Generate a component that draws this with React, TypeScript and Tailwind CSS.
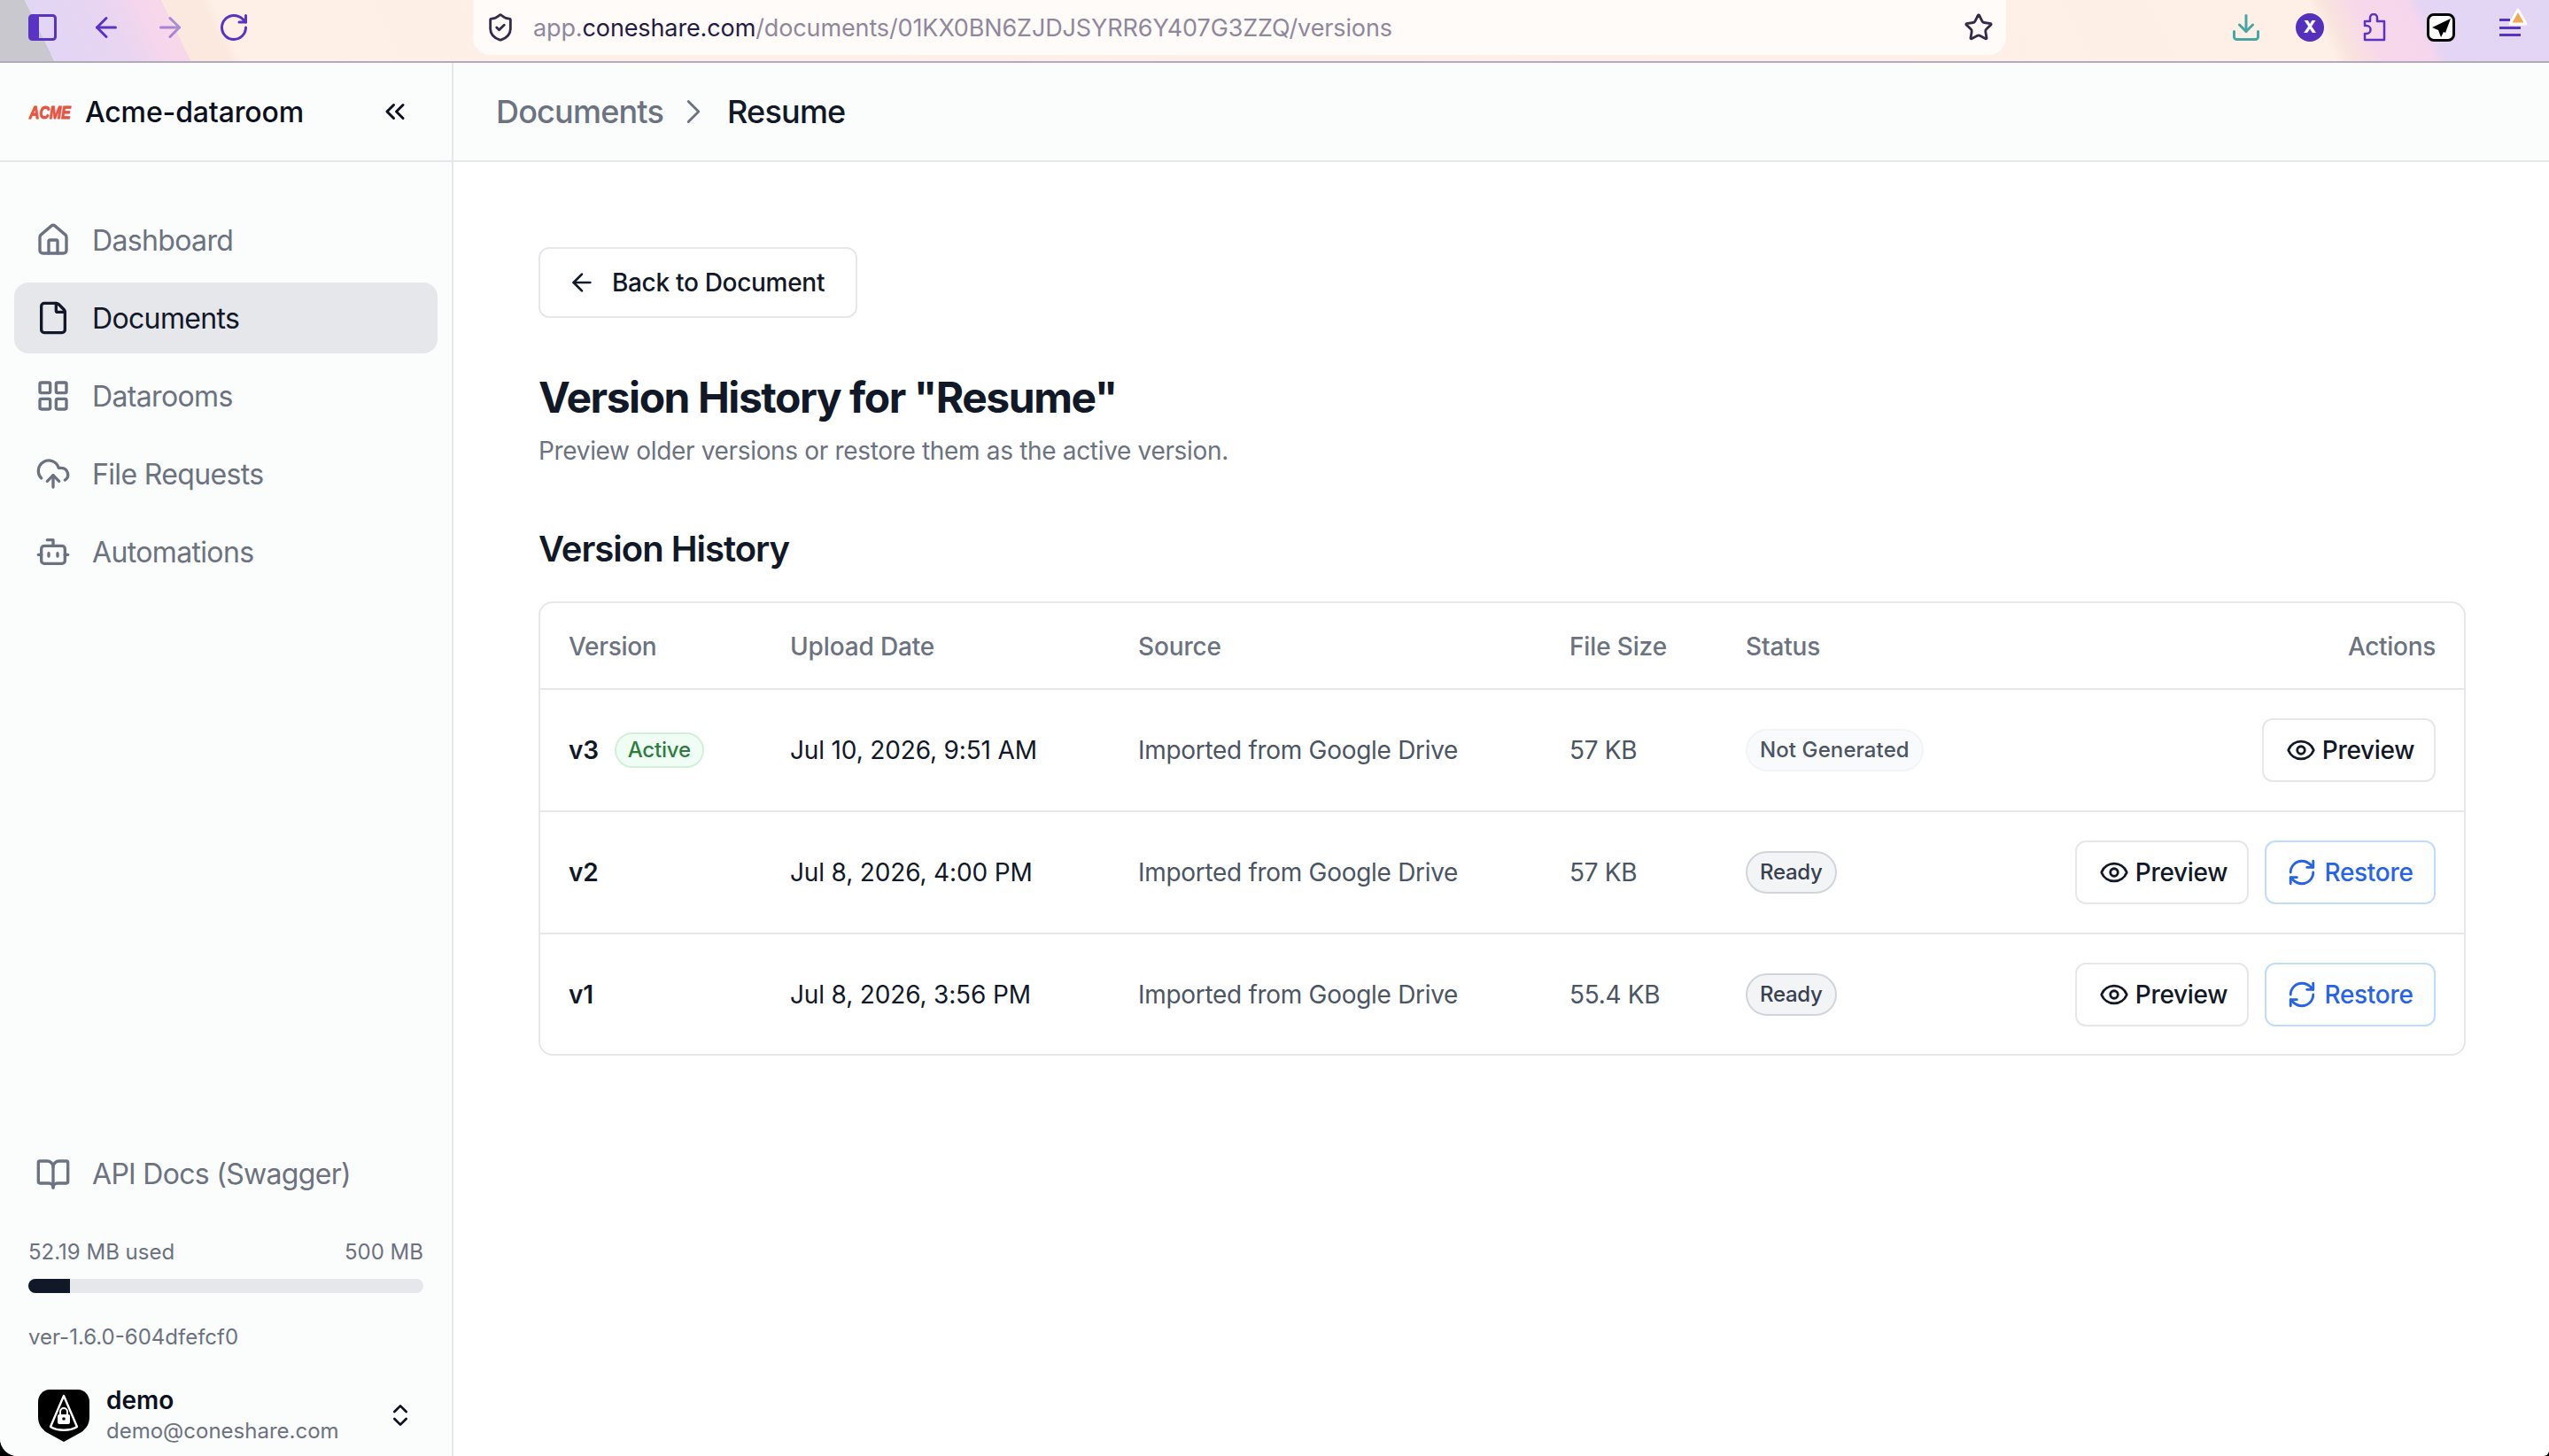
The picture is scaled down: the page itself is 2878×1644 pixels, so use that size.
import { ArrowLeft, BookOpen, Bot, ChevronRight, ChevronsLeft, ChevronsUpDown, CloudUpload, Download, Eye, File, House, LayoutGrid, RefreshCw, RotateCw, ShieldCheck, Star } from "lucide-react";

const navItems = [
  { icon: House, label: "Dashboard" },
  { icon: File, label: "Documents", active: true },
  { icon: LayoutGrid, label: "Datarooms" },
  { icon: CloudUpload, label: "File Requests" },
  { icon: Bot, label: "Automations" },
];

const versions = [
  { version: "v3", date: "Jul 10, 2026, 9:51 AM", size: "57 KB", status: "Not Generated", active: true },
  { version: "v2", date: "Jul 8, 2026, 4:00 PM", size: "57 KB", status: "Ready" },
  { version: "v1", date: "Jul 8, 2026, 3:56 PM", size: "55.4 KB", status: "Ready" },
];

function BrowserBar() {
  return (
    <div className="flex h-[71px] shrink-0 items-start border-b-2 border-[#b3a9bc] bg-[linear-gradient(64deg,#c9c8cf_2.1%,#e1d6f4_2.1%,#e8d5f1_5%,#f6d6ec_6.6%,#f7d8e9_7.4%,#fbe8df_7.4%,#fbe8df_8.9%,#fef0e6_9.4%,#fdeee9_50%,#fef0e6_90.6%,#f9e4de_91.2%,#f7d8ea_92.4%,#f6d6ec_94.4%,#e4d5f4_94.9%,#e1d6f4_100%)]">
      <div className="flex h-[62px] w-[534px] shrink-0 items-center pl-[32px] text-[#5a32c4]">
        <svg viewBox="0 0 32 32" className="h-[32px] w-[32px]" fill="none">
          <rect x="1.5" y="2.5" width="29" height="27" rx="3" stroke="currentColor" strokeWidth="3" />
          <rect x="2" y="3" width="10" height="26" fill="currentColor" />
        </svg>
        <ArrowLeft className="ml-[38px] h-[36px] w-[36px]" strokeWidth={2} />
        <ArrowLeft className="ml-[36px] h-[36px] w-[36px] rotate-180 opacity-50" strokeWidth={2} />
        <RotateCw className="ml-[36px] h-[36px] w-[36px]" strokeWidth={2} />
      </div>
      <div className="flex h-[62px] w-[1731px] shrink-0 items-center justify-between rounded-b-[20px] bg-[#fffbf9] pl-[14px] pr-[14px]">
        <div className="flex items-center gap-[20px]">
          <ShieldCheck className="h-[34px] w-[34px] text-[#342a4a]" strokeWidth={2} />
          <div className="text-[27px] leading-none tracking-[-0.12px] text-[#8f889c]">
            app.<span className="text-[#241b45]">coneshare.com</span>/documents/01KX0BN6ZJDJSYRR6Y407G3ZZQ/versions
          </div>
        </div>
        <Star className="h-[34px] w-[34px] text-[#342a4a]" strokeWidth={2} />
      </div>
      <div className="flex h-[62px] flex-1 items-center pl-[253px]">
        <Download className="h-[36px] w-[36px] text-[#46a6a6]" strokeWidth={2} />
        <div className="ml-[38px] flex h-[32px] w-[32px] items-center justify-center rounded-full bg-[#5530bd] text-[19px] font-extrabold text-white">
          X
        </div>
        <svg viewBox="0 0 26 32" className="ml-[44px] h-[32px] w-[26px] text-[#5a32c4]" fill="none" stroke="currentColor" strokeWidth="2.5" strokeLinejoin="round">
          <path d="M2 9h6V5a4 4 0 0 1 8 0v4h8v21H2v-7h2a4.5 4.5 0 0 0 0-9H2z" />
        </svg>
        <div className="ml-[46px] flex h-[32px] w-[32px] items-center justify-center rounded-[8px] border-[3px] border-black bg-white">
          <svg viewBox="0 0 26 26" className="h-[26px] w-[26px]">
            <path d="M24 3 3 13l7 3 3 8 3-6 2 1z" fill="#000" />
          </svg>
        </div>
        <div className="relative ml-[50px] flex h-[20px] w-[24px] flex-col justify-between">
          <div className="h-[3px] w-[12px] bg-[#5a32c4]" />
          <div className="h-[3px] w-[24px] bg-[#5a32c4]" />
          <div className="h-[3px] w-[24px] bg-[#5a32c4]" />
          <svg viewBox="0 0 24 22" className="absolute -right-[9px] -top-[13px] h-[22px] w-[24px]">
            <path d="M12 3 21 19H3z" fill="#f3a950" stroke="#fff" strokeWidth="3" strokeLinejoin="round" />
          </svg>
        </div>
      </div>
    </div>
  );
}

function Sidebar() {
  return (
    <aside className="flex w-[512px] shrink-0 flex-col border-r-2 border-[#e5e7eb] bg-[#fbfcfc]">
      <div className="flex h-[112px] shrink-0 items-center border-b-2 border-[#e5e7eb] pl-[33px] pr-[46px]">
        <div className="w-[63px] origin-left scale-x-[0.76] font-['Liberation_Sans',sans-serif] text-[21px] font-bold italic leading-none text-[#e8523f] [-webkit-text-stroke:1px_#e8523f]">
          ACME
        </div>
        <div className="flex-1 pt-[2px] text-[32px] font-medium tracking-[-0.15px] text-[#0b1020]">Acme-dataroom</div>
        <ChevronsLeft className="h-[36px] w-[36px] text-[#0b1020]" strokeWidth={2} />
      </div>
      <nav className="flex flex-col gap-[8px] px-[16px] pt-[48px]">
        {navItems.map((item) => (
          <div
            key={item.label}
            className={
              item.active
                ? "flex h-[80px] items-center gap-[24px] rounded-[16px] bg-[#e6e7eb] px-[24px] text-[32px] tracking-[-0.65px] text-[#111827]"
                : "flex h-[80px] items-center gap-[24px] rounded-[16px] px-[24px] text-[32px] tracking-[-0.65px] text-[#6b7280]"
            }
          >
            <item.icon className="h-[40px] w-[40px] shrink-0" strokeWidth={2} />
            <span className="pt-[2px]">{item.label}</span>
          </div>
        ))}
      </nav>
      <div className="mt-auto flex flex-col">
        <div className="flex h-[80px] items-center gap-[24px] px-[40px] text-[32px] tracking-[-0.7px] text-[#6b7280]">
          <BookOpen className="h-[40px] w-[40px] shrink-0" strokeWidth={2} />
          API Docs (Swagger)
        </div>
        <div className="mt-[32px] flex justify-between px-[32px] text-[24px] leading-[32px] text-[#6b7280]">
          <span>52.19 MB used</span>
          <span>500 MB</span>
        </div>
        <div className="mx-[32px] mt-[14px] h-[16px] overflow-hidden rounded-full bg-[#e5e7eb]">
          <div className="h-full bg-[#111827]" style={{ width: `${(52.19 / 500) * 100}%` }} />
        </div>
        <div className="mt-[34px] px-[32px] text-[24px] leading-[32px] text-[#6b7280]">ver-1.6.0-604dfefcf0</div>
        <div className="mt-[26px] flex h-[92px] items-center px-[42px]">
          <svg viewBox="0 0 60 60" className="h-[60px] w-[60px] shrink-0">
            <path d="M14 1h32c7 0 13 6 13 14v16c0 9-3 13-9 18L30 60 10 49C4 44 1 40 1 31V15C1 7 7 1 14 1z" fill="#000" />
            <path d="M30 8 45 43c-8 5-22 5-30 0z" fill="none" stroke="#fff" strokeWidth="2.4" strokeLinejoin="round" />
            <rect x="23" y="29" width="14" height="11" rx="2" fill="#fff" />
            <path d="M26 29v-3a4 4 0 0 1 8 0v3" fill="none" stroke="#fff" strokeWidth="2" />
            <circle cx="30" cy="34" r="1.8" fill="#000" />
          </svg>
          <div className="ml-[18px] flex-1">
            <div className="text-[28px] font-semibold leading-[36px] text-[#0b1020]">demo</div>
            <div className="text-[24px] leading-[34px] text-[#6b7280]">demo@coneshare.com</div>
          </div>
          <ChevronsUpDown className="h-[32px] w-[32px] text-[#0b1020]" strokeWidth={2} />
        </div>
      </div>
    </aside>
  );
}

function PreviewButton() {
  return (
    <button className="flex h-[72px] w-[196px] items-center justify-center gap-[7px] rounded-[12px] border-2 border-[#e5e7eb] bg-white pl-[3px] text-[28px] font-medium tracking-[-0.3px] text-[#111827]">
      <Eye className="h-[34px] w-[34px]" strokeWidth={2} />
      Preview
    </button>
  );
}

function RestoreButton() {
  return (
    <button className="flex h-[72px] w-[193px] items-center justify-center gap-[8px] rounded-[12px] border-2 border-[#bfdbfe] bg-white text-[28px] font-medium tracking-[-0.3px] text-[#2563eb]">
      <RefreshCw className="h-[34px] w-[34px]" strokeWidth={2} />
      Restore
    </button>
  );
}

export default function App() {
  return (
    <div className="h-screen overflow-hidden bg-black">
      <div className="flex h-full flex-col overflow-hidden rounded-bl-[20px] rounded-br-[6px] bg-white font-['Inter',sans-serif]">
        <BrowserBar />
        <div className="flex min-h-0 flex-1">
          <Sidebar />
          <div className="flex min-w-0 flex-1 flex-col">
            <header className="flex h-[112px] shrink-0 items-center gap-[11px] border-b-2 border-[#e5e7eb] bg-[#fbfcfc] pl-[48px] text-[36px] font-medium tracking-[-0.8px]">
              <span className="text-[#6b7280]">Documents</span>
              <ChevronRight className="h-[46px] w-[46px] text-[#6b7280]" strokeWidth={1.5} />
              <span className="pl-[4px] text-[#111827]">Resume</span>
            </header>
            <main className="flex-1 pl-[96px] pr-[94px] pt-[96px]">
              <button className="flex h-[80px] w-[360px] items-center justify-center gap-[18px] rounded-[12px] border-2 border-[#e5e7eb] bg-white pr-[4px] text-[28px] font-medium tracking-[-0.3px] text-[#111827]">
                <ArrowLeft className="h-[32px] w-[32px]" strokeWidth={2} />
                Back to Document
              </button>
              <h1 className="mt-[58px] text-[48px] font-bold leading-[64px] tracking-[-1.46px] text-[#111827]">
                Version History for "Resume"
              </h1>
              <p className="mt-[8px] text-[28px] leading-[40px] tracking-[-0.33px] text-[#6b7280]">
                Preview older versions or restore them as the active version.
              </p>
              <h2 className="mt-[63px] text-[40px] font-semibold leading-[56px] tracking-[-1px] text-[#111827]">
                Version History
              </h2>
              <div className="mt-[31px] overflow-hidden rounded-[16px] border-2 border-[#e5e7eb]">
                <table className="w-full table-fixed text-left text-[28px] tracking-[-0.3px]">
                  <colgroup>
                    <col className="w-[282px]" />
                    <col className="w-[393px]" />
                    <col className="w-[487px]" />
                    <col className="w-[199px]" />
                    <col />
                    <col className="w-[500px]" />
                  </colgroup>
                  <thead>
                    <tr className="h-[97px] border-b-2 border-[#e5e7eb] text-[#6b7280]">
                      <th className="pl-[32px] pt-[2px] font-medium">Version</th>
                      <th className="pt-[2px] font-medium tracking-[-0.15px]">Upload Date</th>
                      <th className="pt-[2px] font-medium tracking-[-0.15px]">Source</th>
                      <th className="pt-[2px] font-medium tracking-[-0.15px]">File Size</th>
                      <th className="pt-[2px] font-medium tracking-[-0.15px]">Status</th>
                      <th className="pr-[32px] pt-[2px] text-right font-medium">Actions</th>
                    </tr>
                  </thead>
                  <tbody>
                    {versions.map((row, index) => (
                      <tr
                        key={row.version}
                        className={index < versions.length - 1 ? "h-[138px] border-b-2 border-[#e5e7eb]" : "h-[136px]"}
                      >
                        <td className="pl-[32px]">
                          <div className="flex items-center gap-[18px]">
                            <span className="font-semibold text-[#111827]">{row.version}</span>
                            {row.active && (
                              <span className="rounded-full border-2 border-[#d1f0da] bg-[#f0fdf4] px-[13px] text-[24px] font-medium leading-[36px] tracking-[-0.2px] text-[#2e7d3f]">
                                Active
                              </span>
                            )}
                          </div>
                        </td>
                        <td className="tracking-[-0.15px] text-[#111827]">{row.date}</td>
                        <td className="text-[#4b5563]">Imported from Google Drive</td>
                        <td className="text-[#4b5563]">{row.size}</td>
                        <td>
                          <span
                            className={
                              row.status === "Ready"
                                ? "inline-block whitespace-nowrap rounded-full border-2 border-[#d1d5db] bg-[#f3f4f6] px-[14px] text-[24px] font-medium leading-[44px] text-[#374151]"
                                : "inline-block whitespace-nowrap rounded-full border-2 border-[#f3f4f6] bg-[#f9fafb] px-[14px] text-[24px] font-medium leading-[44px] tracking-[0.1px] text-[#4b5563]"
                            }
                          >
                            {row.status}
                          </span>
                        </td>
                        <td className="pr-[32px]">
                          <div className="flex justify-end gap-[18px]">
                            <PreviewButton />
                            {!row.active && <RestoreButton />}
                          </div>
                        </td>
                      </tr>
                    ))}
                  </tbody>
                </table>
              </div>
            </main>
          </div>
        </div>
      </div>
    </div>
  );
}
